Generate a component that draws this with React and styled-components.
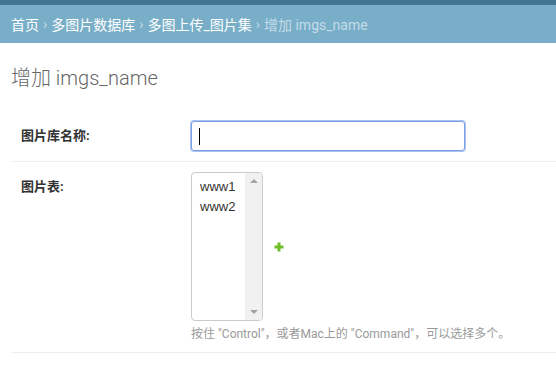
import React from "react";
import styled, { createGlobalStyle } from "styled-components";

const Global = createGlobalStyle`
  html, body { margin: 0; padding: 0; background: #fff; }
  body {
    font-family: Roboto, "Noto Sans CJK SC", "Liberation Sans", sans-serif;
    color: #333;
    font-size: 14px;
  }
`;

const Header = styled.div`
  height: 5px;
  background: #417690;
`;

const Breadcrumbs = styled.div`
  background: #79aec8;
  height: 38px;
  padding: 0 11px;
  display: flex;
  align-items: center;
  font-size: 14px;
  color: #c4dce8;
  white-space: nowrap;
`;

const Crumb = styled.span`
  color: ${(p) => (p.$current ? "#c4dce8" : "#fff")};
`;

const Sep = styled.span`
  color: #c4dce8;
  margin: 0 4px;
`;

const Content = styled.div`
  padding: 23px 0 0 11px;
`;

const Title = styled.h1`
  margin: 0 0 21px;
  font-size: 20px;
  line-height: 24px;
  font-weight: 300;
  color: #666;
`;

const Row = styled.div`
  display: flex;
  padding: 10px;
  border-bottom: 1px solid #eee;
`;

const Label = styled.label`
  width: 170px;
  flex: none;
  padding-top: 5px;
  font-size: 13px;
  line-height: 20px;
  font-weight: 700;
  color: #333;
`;

const Field = styled.div`
  display: flex;
  flex-direction: column;
`;

const TextInput = styled.div`
  width: 274px;
  height: 30px;
  box-sizing: border-box;
  border: 1px solid #7b9fe6;
  box-shadow: 0 0 0 1px #a9c2f2;
  border-radius: 3px;
  display: flex;
  align-items: center;
  padding-left: 7px;
`;

const Caret = styled.span`
  width: 1px;
  height: 17px;
  background: #000;
`;

const WidgetWrap = styled.div`
  display: flex;
  align-items: center;
`;

const ListBox = styled.div`
  width: 72px;
  height: 149px;
  box-sizing: border-box;
  border: 1px solid #ccc;
  border-radius: 4px;
  display: flex;
  overflow: hidden;
`;

const Options = styled.div`
  flex: 1;
  padding: 4px 0 0 8px;
`;

const Option = styled.div`
  font-size: 13px;
  line-height: 20px;
  color: #333;
  font-family: "Liberation Sans", Roboto, sans-serif;
`;

const Scrollbar = styled.div`
  width: 17px;
  background: #f1f1f1;
  display: flex;
  flex-direction: column;
  justify-content: space-between;
  align-items: center;
  padding: 6px 0;
`;

const Arrow = styled.span`
  width: 0;
  height: 0;
  border-left: 4px solid transparent;
  border-right: 4px solid transparent;
  ${(p) =>
    p.$down
      ? "border-top: 4px solid #a3a3a3;"
      : "border-bottom: 4px solid #a3a3a3;"}
`;

const AddLink = styled.a`
  margin-left: 11px;
  display: flex;
  margin-top: 1px;
`;

const Help = styled.div`
  margin-top: 5px;
  font-size: 12px;
  line-height: 16px;
  color: #999;
`;

export default function App() {
  return (
    <>
      <Global />
      <Header />
      <Breadcrumbs>
        <Crumb>首页</Crumb>
        <Sep>›</Sep>
        <Crumb>多图片数据库</Crumb>
        <Sep>›</Sep>
        <Crumb>多图上传_图片集</Crumb>
        <Sep>›</Sep>
        <Crumb $current>增加 imgs_name</Crumb>
      </Breadcrumbs>
      <Content>
        <Title>增加 imgs_name</Title>
        <Row>
          <Label>图片库名称:</Label>
          <Field>
            <TextInput>
              <Caret />
            </TextInput>
          </Field>
        </Row>
        <Row>
          <Label>图片表:</Label>
          <Field>
            <WidgetWrap>
              <ListBox>
                <Options>
                  <Option>www1</Option>
                  <Option>www2</Option>
                </Options>
                <Scrollbar>
                  <Arrow />
                  <Arrow $down />
                </Scrollbar>
              </ListBox>
              <AddLink>
                <svg width="10" height="10" viewBox="0 0 10 10">
                  <rect x="3.5" y="0.5" width="3" height="9" fill="#70bf2b" />
                  <rect x="0.5" y="3.5" width="9" height="3" fill="#70bf2b" />
                </svg>
              </AddLink>
            </WidgetWrap>
            <Help>按住 "Control"，或者Mac上的 "Command"，可以选择多个。</Help>
          </Field>
        </Row>
      </Content>
    </>
  );
}
